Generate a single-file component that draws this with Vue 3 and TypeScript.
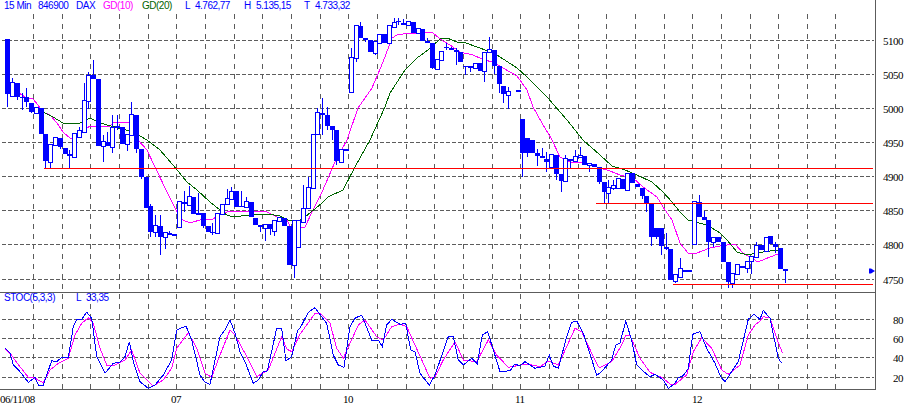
<script setup lang="ts">
// [high, low, bodyTop, bodyBottom, filled], all in chart pixels
type Bar = [number, number, number, number, number] | null

const bars: Bar[] = [
  [39,107,39,94,1],[78,96,82,96,0],[83,100,83,97,1],[93,110,97,98,1],[88,107,97,102,1],[103,113,103,112,1],
  [107,114,107,113,0],[108,134,108,134,1],[134,168,134,161,1],[144,168,144,162,0],[137,145,137,145,0],[138,149,138,147,1],
  [148,154,148,154,1],[150,168,154,156,1],[133,157,133,157,0],[127,137,130,137,0],[83,132,100,132,0],[72,109,75,101,0],
  [60,79,75,79,1],[79,146,79,146,1],[135,162,141,146,0],[132,146,142,146,1],[115,153,127,147,0],[115,130,126,128,1],
  [127,144,127,144,1],[134,151,134,144,0],[102,135,114,135,0],[115,153,115,149,1],[149,179,149,177,1],[177,208,177,208,1],
  [204,237,206,232,1],[215,237,225,232,0],[215,255,226,237,1],[232,249,232,237,0],[231,235,233,235,1],[234,236,234,236,1],
  [201,228,201,227,0],[191,212,202,204,1],[186,205,196,205,0],[197,214,197,214,1],[193,214,213,214,0],[213,228,213,226,1],
  [226,232,226,232,1],[223,235,232,233,1],[213,233,213,233,0],[204,214,204,214,0],[189,204,198,204,0],[187,199,191,199,0],
  [191,207,191,207,1],[191,207,206,207,1],[197,207,201,207,0],[202,217,202,217,1],[218,225,218,225,1],[225,232,225,227,1],
  [224,241,224,228,0],[224,235,224,229,1],[220,236,220,231,0],[217,221,217,221,0],[218,226,218,226,1],[226,265,226,265,1],
  [220,278,220,265,0],[220,247,220,247,0],[185,222,208,222,0],[177,208,187,208,0],[134,188,134,188,0],[108,134,112,134,0],
  [98,135,113,115,1],[107,130,115,126,1],[126,140,126,130,1],[130,165,130,161,1],[149,162,149,162,0],[149,151,149,151,1],
  [48,92,57,92,0],[25,62,25,58,0],[22,38,26,38,1],[38,42,38,40,1],[40,52,40,52,1],[41,55,41,53,0],
  [34,43,34,43,0],[34,43,34,43,1],[25,43,25,43,0],[18,27,22,27,0],[18,25,21,21,1],[19,25,23,25,1],
  [21,25,21,25,0],[22,33,22,33,1],[28,33,28,33,0],[29,41,29,41,1],[38,43,41,43,1],[43,69,43,68,1],
  [59,69,59,69,0],[51,60,51,60,0],[43,50,47,48,1],[47,50,48,50,1],[48,65,50,52,1],[52,62,52,62,1],
  [66,75,66,67,1],[66,72,66,68,1],[63,68,63,68,0],[63,71,63,71,1],[52,82,52,71,0],[37,52,49,52,0],
  [50,74,50,66,1],[66,93,66,84,1],[86,103,86,94,1],[87,109,91,95,0],null,[90,92,90,92,1],
  [119,177,119,153,1],[138,157,138,153,1],[140,153,140,153,1],[149,166,153,156,1],[148,158,156,158,1],[152,172,159,162,1],
  [154,167,154,167,0],[155,180,155,174,1],[174,192,174,181,1],[155,181,158,181,0],[159,168,159,161,1],[150,161,156,161,0],
  [147,157,155,157,0],[156,165,156,165,1],[163,172,163,165,0],[164,167,164,167,1],[167,184,167,182,1],[182,203,182,192,1],
  [180,203,187,193,0],[180,190,185,188,0],[178,188,178,188,0],[179,189,179,189,1],[173,191,173,190,0],[173,183,173,183,1],
  [184,187,184,187,1],[188,199,188,196,1],[196,212,196,203,1],[203,246,203,237,1],[228,239,228,237,1],[228,255,228,246,1],
  [233,250,247,249,1],[249,280,249,280,1],[274,283,274,281,0],[258,277,268,277,0],[270,272,270,272,1],[270,272,270,272,1],
  [201,244,201,244,0],[195,217,202,217,1],[211,220,217,220,1],[220,257,220,242,1],[237,247,237,242,0],[237,242,237,242,1],
  [242,262,242,262,1],[262,288,262,282,1],[273,288,273,283,0],[264,274,264,274,0],[266,268,266,268,1],[261,273,261,268,0],
  [256,274,256,261,0],[242,257,245,257,0],[245,250,245,250,1],[237,251,237,251,0],[236,244,236,244,1],[242,253,244,247,1],
  [248,269,248,269,1],[269,283,269,271,1]
]

const candles = bars.flatMap((b, i) => {
  if (!b) return []
  const x = Math.round(7.3 + 4.77 * i)
  return [{ x, high: b[0], low: b[1], top: b[2], bottom: b[3], filled: b[4] === 1 }]
})

const gridX = Array.from({ length: 29 }, (_, i) => Math.round(33 + 28.66 * i) + 0.5)
const priceLabels = [
  { y: 40.5, t: '5100' }, { y: 74.5, t: '5050' }, { y: 108.5, t: '5000' }, { y: 142.5, t: '4950' },
  { y: 176.5, t: '4900' }, { y: 210.5, t: '4850' }, { y: 244.5, t: '4800' }, { y: 279.5, t: '4750' }
]
const stocLabels = [
  { y: 319.5, t: '80' }, { y: 338.5, t: '60' }, { y: 357.5, t: '40' }, { y: 377.5, t: '20' }
]
const dates = [
  { x: 0, t: '06/11/08' }, { x: 171, t: '07' }, { x: 343, t: '10' }, { x: 515, t: '11' }, { x: 692, t: '12' }
]
const legend = [
  { x: 4, t: '15 Min', c: 'blue' }, { x: 38, t: '846900', c: 'blue' }, { x: 76, t: 'DAX', c: 'blue' },
  { x: 103, t: 'GD(10)', c: 'pink' }, { x: 142, t: 'GD(20)', c: 'green' }, { x: 185, t: 'L', c: 'blue' },
  { x: 195, t: '4.762,77', c: 'blue' }, { x: 244, t: 'H', c: 'blue' }, { x: 256, t: '5.135,15', c: 'blue' },
  { x: 304, t: 'T', c: 'blue' }, { x: 315, t: '4.733,32', c: 'blue' }
]

const gd10 = '19,93 25,97 33,99 38,105 43,112 50,115 57,123 63,132 71,139 82,132 90,126 110,126 113,123 127,122 133,125 138,140 147,150 155,167 167,192 177,212 178,218 190,223 203,219 213,219 220,214 227,212 250,211 258,211 267,212 277,217 287,220 292,230 300,228 305,227 313,210 322,192 335,162 347,140 358,108 372,88 383,62 392,38 397,35 410,33 417,33 432,32 440,39 450,45 460,52 473,55 482,59 495,63 503,68 517,76 527,90 533,107 542,123 552,140 560,157 570,162 580,162 590,165 600,168 610,171 620,175 633,178 643,187 657,197 663,207 672,220 680,243 688,253 697,253 710,248 720,246 735,244 743,253 758,262 770,257 778,254'
const gd20 = '43,112 53,117 63,123 72,124 80,123 90,118 100,123 133,132 147,140 160,150 173,165 187,182 197,190 210,202 220,210 227,215 233,217 250,215 267,214 280,216 290,221 300,220 305,217 322,203 328,197 343,190 355,167 370,140 385,107 390,93 405,70 417,58 428,50 440,39 447,38 457,42 463,42 480,48 497,55 517,68 527,77 547,97 567,120 583,140 600,155 612,166 625,170 637,175 652,182 663,192 672,202 680,212 688,220 707,225 720,233 727,240 737,252 747,255 763,252 778,250'

// stochastic traces, read off in 3x crops: [originX, raw points]
function crop(originX: number, raw: number[][]) {
  return raw.map(([x, y]) => `${(originX + x / 3).toFixed(1)},${(285 + y / 3).toFixed(1)}`).join(' ')
}
const stocBlue = [
  crop(0, [[15,190],[30,205],[40,240],[60,260],[85,292],[105,277],[115,300],[130,300],[155,227],[170,230],[185,217],[205,217],[220,125],[230,103],[245,103],[260,82],[275,100],[290,215],[315,265],[340,235],[360,232],[375,215],[388,170],[400,230],[420,290],[445,310],[465,300],[490,270],[515,225],[530,135],[558,123],[575,165],[600,270],[615,292],[630,298],[660,155],[675,135],[690,105],[705,145],[720,200],[735,230],[760,295],[775,285],[790,260],[802,258],[830,130],[845,130],[858,228],[875,215],[893,135]]),
  crop(300, [[0,130],[25,82],[45,68],[80,115],[100,210],[115,240],[132,247],[150,125],[165,100],[185,90],[215,165],[235,165],[247,185],[260,120],[275,103],[300,118],[317,115],[332,195],[345,200],[360,265],[388,300],[405,270],[445,155],[460,155],[475,225],[490,240],[515,220],[532,237],[547,150],[563,140],[600,260],[630,257],[645,237],[660,243],[675,230],[705,250],[735,243],[748,210],[760,243],[775,250],[800,155],[815,112],[830,108],[850,145],[890,270]]),
  crop(600, [[0,265],[35,225],[47,180],[60,175],[77,108],[95,165],[110,240],[125,255],[150,275],[165,268],[190,285],[205,310],[225,295],[235,278],[250,272],[265,250],[278,148],[300,140],[320,190],[345,235],[362,275],[375,290],[415,230],[445,103],[462,88],[480,103],[490,76],[510,100],[535,220],[545,235]])
].join(' ')
const stocPink = [
  crop(0, [[15,192],[30,205],[60,245],[85,277],[100,277],[130,293],[150,255],[175,235],[205,220],[225,150],[245,115],[265,98],[280,115],[300,190],[320,240],[345,240],[375,225],[395,195],[420,265],[460,303],[490,285],[515,250],[530,190],[565,143],[590,190],[615,265],[635,277],[660,210],[690,135],[705,150],[735,205],[770,275],[805,255],[845,155],[860,192],[875,200]]),
  crop(300, [[0,148],[45,85],[60,85],[90,115],[110,190],[130,220],[175,120],[195,105],[230,155],[250,165],[275,125],[300,117],[320,125],[345,180],[390,280],[405,275],[430,225],[465,170],[490,225],[530,230],[565,165],[590,210],[625,247],[680,237],[720,245],[745,228],[775,240],[825,130],[845,140],[880,215],[895,245]]),
  crop(600, [[0,248],[35,230],[65,180],[77,152],[90,152],[120,220],[150,262],[190,280],[210,297],[225,298],[260,270],[280,200],[305,158],[335,190],[365,255],[385,268],[420,240],[445,150],[465,120],[480,108],[490,95],[510,98],[530,160],[547,203]])
].join(' ')
</script>

<template>
  <div class="chart">
    <svg width="906" height="407" viewBox="0 0 906 407">
      <!-- grid -->
      <g class="grid">
        <line v-for="x in gridX" :key="'m' + x" class="vert" :x1="x" y1="14" :x2="x" y2="292" />
        <line v-for="x in gridX" :key="'s' + x" class="vert" :x1="x" y1="294" :x2="x" y2="392" />
        <line v-for="p in priceLabels" :key="p.t" x1="2" :y1="p.y" x2="874" :y2="p.y" />
        <line v-for="p in stocLabels" :key="p.t" x1="2" :y1="p.y" x2="874" :y2="p.y" />
      </g>

      <!-- frame -->
      <g class="frame">
        <line x1="875.5" y1="0" x2="875.5" y2="390" />
        <line x1="0" y1="292.5" x2="875" y2="292.5" />
        <line x1="0" y1="389.5" x2="875" y2="389.5" />
      </g>

      <!-- moving averages -->
      <polyline class="trace gd10" :points="gd10" />
      <polyline class="trace gd20" :points="gd20" />

      <!-- candles -->
      <g v-for="c in candles" :key="c.x">
        <line class="wick" :x1="c.x + 0.5" :y1="c.high" :x2="c.x + 0.5" :y2="c.low" />
        <rect v-if="c.filled" class="body-down" :x="c.x - 2" :y="c.top" width="5" :height="Math.max(c.bottom - c.top, 1)" />
        <rect v-else class="body-up" :x="c.x - 1.5" :y="c.top + 0.5" width="4" :height="c.bottom - c.top" />
      </g>

      <!-- support / resistance -->
      <g class="level">
        <line x1="44" y1="168.5" x2="873" y2="168.5" />
        <line x1="596" y1="203.5" x2="873" y2="203.5" />
        <line x1="673" y1="284.5" x2="873" y2="284.5" />
      </g>

      <polygon class="marker" points="869,268.5 871,268.5 875,271 871,273.5 869,273.5" />

      <!-- stochastic -->
      <polyline class="trace stoc-pink" :points="stocPink" />
      <polyline class="trace stoc-blue" :points="stocBlue" />

      <!-- texts -->
      <text v-for="l in legend" :key="l.x" class="legend" :class="l.c" :x="l.x" y="9">{{ l.t }}</text>
      <text class="legend blue" x="4" y="301">STOC(5,3,3)</text>
      <text class="legend blue" x="76" y="301">L</text>
      <text class="legend blue" x="86" y="301">33,35</text>

      <text v-for="p in priceLabels" :key="p.t" class="axis" x="883" :y="p.y + 4">{{ p.t }}</text>
      <text v-for="p in stocLabels" :key="p.t" class="axis" x="893" :y="p.y + 4">{{ p.t }}</text>
      <text v-for="d in dates" :key="d.t" class="axis" :x="d.x" y="403">{{ d.t }}</text>
    </svg>
  </div>
</template>

<style scoped>
.chart {
  width: 906px;
  height: 407px;
  background: #fff;
  overflow: hidden;
}

svg {
  display: block;
}

.grid line {
  stroke: #5c5c5c;
  stroke-width: 1;
  stroke-dasharray: 4 2;
  shape-rendering: crispEdges;
}

.grid line.vert {
  stroke-dasharray: 5 5;
}

.frame line {
  stroke: #5c5c5c;
  stroke-width: 1;
  shape-rendering: crispEdges;
}

.trace {
  fill: none;
  stroke-width: 1;
  shape-rendering: crispEdges;
}

.gd10,
.stoc-pink {
  stroke: #ff00ff;
}

.gd20 {
  stroke: #006400;
}

.stoc-blue {
  stroke: #0000ff;
}

.wick {
  stroke: #0000ff;
  stroke-width: 1;
  shape-rendering: crispEdges;
}

.body-down {
  fill: #0000ff;
  shape-rendering: crispEdges;
}

.body-up {
  fill: #fff;
  stroke: #0000ff;
  stroke-width: 1;
  shape-rendering: crispEdges;
}

.level line {
  stroke: #ff0000;
  stroke-width: 1;
  shape-rendering: crispEdges;
}

.marker {
  fill: #0000ff;
}

.legend {
  font-family: "Liberation Sans", Arial, sans-serif;
  font-size: 10px;
  letter-spacing: -0.5px;
}

.legend.blue {
  fill: #0000ff;
}

.legend.pink {
  fill: #ff00ff;
}

.legend.green {
  fill: #006400;
}

.axis {
  font-family: "Liberation Serif", "Times New Roman", serif;
  font-size: 11px;
  letter-spacing: -0.5px;
  fill: #000;
}
</style>
